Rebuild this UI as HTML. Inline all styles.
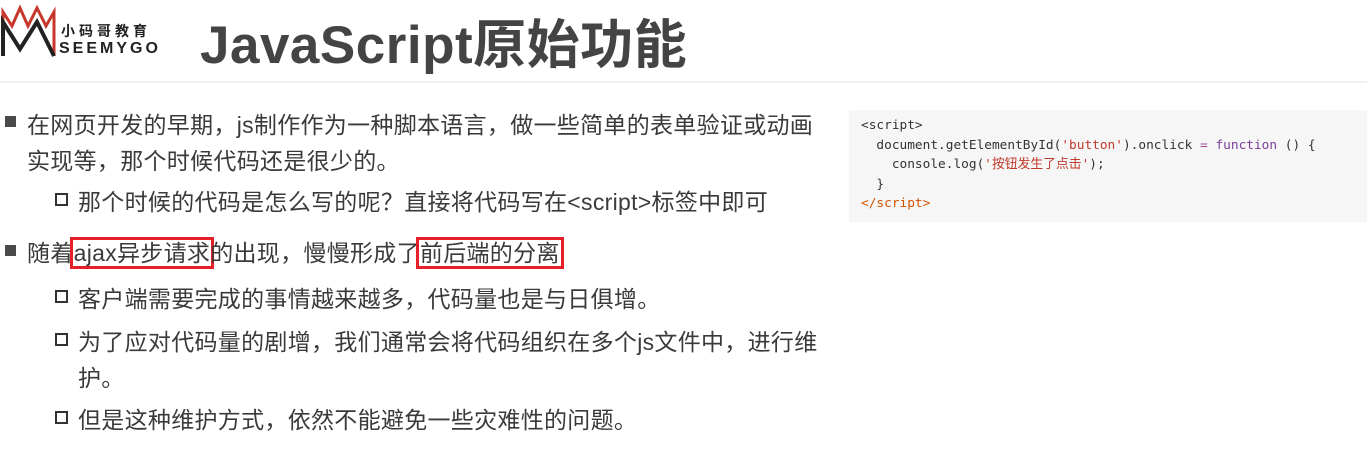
<!DOCTYPE html>
<html><head><meta charset="utf-8"><style>
body{margin:0;width:1367px;height:473px;background:#fff;overflow:hidden;position:relative;font-family:"Liberation Sans","Noto Sans CJK SC",sans-serif;color:#3a3a3a}
.t{position:absolute;font-size:23px;white-space:nowrap;letter-spacing:0.3px}
.sq{position:absolute;width:11px;height:11px;background:#4a4a4a}
.hq{position:absolute;width:9px;height:9px;border:2.5px solid #333}
.rb{border:3px solid #e5202a;padding:0 1px;margin:0 -4px}
.code{position:absolute;left:849px;top:110px;width:518px;height:112px;background:#f6f6f6;font-family:"DejaVu Sans Mono","Liberation Mono","Noto Sans CJK SC",monospace;font-size:12.8px;color:#333;line-height:19.5px;padding-top:6px;box-sizing:border-box}
.code div{white-space:pre;padding-left:12px}
</style></head><body>
<div style="position:absolute;left:0;top:81px;width:1367px;height:2px;background:#f2f2f2"></div>
<svg style="position:absolute;left:0;top:4px" width="60" height="56" viewBox="0 0 60 56">
<path d="M3 52 L3 8 L12 22 L20 4 L28 22 L37 4 L46 22 L54 8 L54 52" fill="none" stroke="#c8372d" stroke-width="3"/>
<path d="M3 52 L3 18 L20 45 L37 18 L54 52" fill="none" stroke="#222" stroke-width="4"/>
</svg>
<div style="position:absolute;left:61px;top:21px;font-size:14px;font-weight:bold;letter-spacing:4px;color:#222">小码哥教育</div>
<div style="position:absolute;left:59px;top:40px;font-size:16px;font-weight:bold;letter-spacing:3px;color:#222">SEEMYGO</div>
<div style="position:absolute;left:200px;top:3px;font-size:53px;font-weight:bold;color:#444;letter-spacing:0.5px">JavaScript原始功能</div>

<div class="sq" style="left:5px;top:116px"></div>
<div class="t" style="left:27px;top:106px">在网页开发的早期，js制作作为一种脚本语言，做一些简单的表单验证或动画</div>
<div class="t" style="left:27px;top:142px">实现等，那个时候代码还是很少的。</div>
<div class="hq" style="left:55px;top:193px"></div>
<div class="t" style="left:78px;top:183px">那个时候的代码是怎么写的呢？直接将代码写在&lt;script&gt;标签中即可</div>
<div class="sq" style="left:5px;top:245px"></div>
<div class="t" style="left:27px;top:234px">随着<span class="rb">ajax异步请求</span>的出现，慢慢形成了<span class="rb">前后端的分离</span></div>
<div class="hq" style="left:55px;top:290px"></div>
<div class="t" style="left:78px;top:280px">客户端需要完成的事情越来越多，代码量也是与日俱增。</div>
<div class="hq" style="left:55px;top:333px"></div>
<div class="t" style="left:78px;top:323px">为了应对代码量的剧增，我们通常会将代码组织在多个js文件中，进行维</div>
<div class="t" style="left:78px;top:359px">护。</div>
<div class="hq" style="left:55px;top:411px"></div>
<div class="t" style="left:78px;top:401px">但是这种维护方式，依然不能避免一些灾难性的问题。</div>

<div class="code">
<div>&lt;script&gt;</div>
<div>  document.getElementById(<span style="color:#c0392b">'button'</span>).onclick <span style="color:#a0459a">=</span> <span style="color:#7a3e9d">function</span> () {</div>
<div>    console.log(<span style="color:#c0392b">'按钮发生了点击'</span>);</div>
<div>  }</div>
<div style="color:#d35400">&lt;/script&gt;</div>
</div>
</body></html>
